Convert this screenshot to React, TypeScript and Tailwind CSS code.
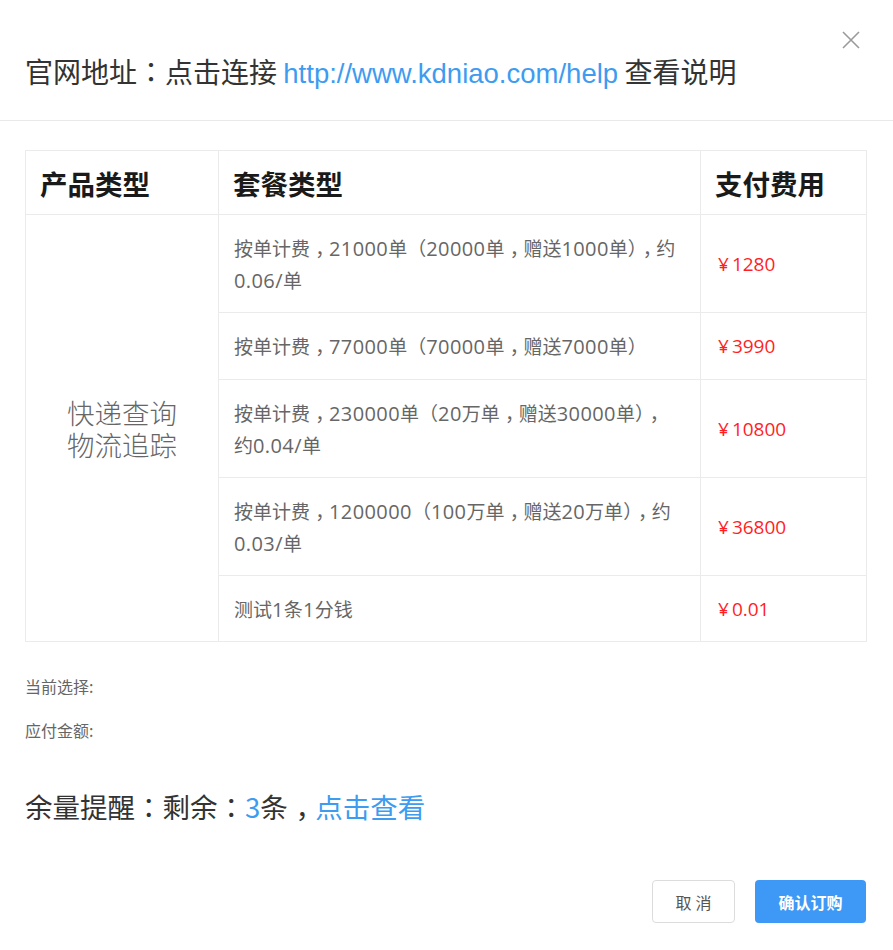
import React from "react";

const PUNCT_CLS: Record<string, string> = {
  "，": "ml-[0.28em] tracking-[-0.28em]",
  "：": "font-['Noto_Sans_CJK_TC','Noto_Sans_CJK_SC',sans-serif]",
  "（": "font-['Noto_Sans_CJK_TC','Noto_Sans_CJK_SC',sans-serif]",
  "）": "font-['Noto_Sans_CJK_TC','Noto_Sans_CJK_SC',sans-serif]",
};
const LATIN = /^[0-9.\/]+$/;

function fmt(s: string, latinCls: string) {
  return s
    .split(/([：，（）]|[0-9.\/]+)/)
    .filter(Boolean)
    .map((p, i) =>
      PUNCT_CLS[p] ? (
        <span key={i} className={PUNCT_CLS[p]}>
          {p}
        </span>
      ) : LATIN.test(p) && latinCls ? (
        <span key={i} className={latinCls}>
          {p}
        </span>
      ) : (
        <React.Fragment key={i}>{p}</React.Fragment>
      )
    );
}

const rows: { lines: string[]; price: string; h: string }[] = [
  { lines: ["按单计费，21000单（20000单，赠送1000单），约", "0.06/单"], price: "1280", h: "h-[98px]" },
  { lines: ["按单计费，77000单（70000单，赠送7000单）"], price: "3990", h: "h-[67px]" },
  { lines: ["按单计费，230000单（20万单，赠送30000单），", "约0.04/单"], price: "10800", h: "h-[98px]" },
  { lines: ["按单计费，1200000（100万单，赠送20万单），约", "0.03/单"], price: "36800", h: "h-[98px]" },
  { lines: ["测试1条1分钱"], price: "0.01", h: "h-[66px]" },
];

const bodyLatin = "font-['Open_Sans',sans-serif] text-[20px] tracking-[0.4px]";

export default function App() {
  return (
    <div className="relative w-[893px] h-[950px] bg-white font-['Noto_Sans_CJK_SC','Noto_Sans',sans-serif] text-[#333]">
      {/* header */}
      <div className="h-[121px] border-b border-[#e9e9e9] flex items-center px-[25px] pt-[24px]">
        <div className="text-[28px] leading-[36px] text-[#333] whitespace-nowrap">
          {fmt("官网地址：点击连接", "")}{" "}
          <span className="text-[#3d9cf0] text-[27.5px] font-['Liberation_Sans',Arial,sans-serif]">
            http://www.kdniao.com/help
          </span>{" "}
          查看说明
        </div>
      </div>
      <button className="absolute right-[32px] top-[30px] w-[20px] h-[20px] flex items-center justify-center">
        <svg width="20" height="20" viewBox="0 0 20 20" fill="none">
          <path d="M2 2L18 18M18 2L2 18" stroke="#9a9a9a" strokeWidth="1.6" />
        </svg>
      </button>

      {/* table */}
      <div className="px-[25px] pt-[29px]">
        <table className="w-[841px] border-collapse table-fixed">
          <colgroup>
            <col className="w-[193px]" />
            <col className="w-[482px]" />
            <col className="w-[166px]" />
          </colgroup>
          <thead>
            <tr className="h-[64px]">
              <th className="border border-[#ebebeb] text-left pl-[14px] text-[27.5px] font-bold text-[#1a1a1a] leading-[32px]">
                产品类型
              </th>
              <th className="border border-[#ebebeb] text-left pl-[14px] text-[27.5px] font-bold text-[#1a1a1a] leading-[32px]">
                套餐类型
              </th>
              <th className="border border-[#ebebeb] text-left pl-[14px] text-[27.5px] font-bold text-[#1a1a1a] leading-[32px]">
                支付费用
              </th>
            </tr>
          </thead>
          <tbody>
            {rows.map((r, i) => (
              <tr key={i} className={r.h}>
                {i === 0 && (
                  <td
                    rowSpan={rows.length}
                    className="border border-[#ebebeb] text-center align-middle text-[27.5px] leading-[32px] text-[#666] font-light"
                  >
                    <div>快递查询</div>
                    <div>物流追踪</div>
                  </td>
                )}
                <td className="border border-[#ebebeb] px-[15px] py-0 align-middle text-[19px] leading-[31px] text-[#666] whitespace-nowrap">
                  {r.lines.map((l, j) => (
                    <div key={j}>{fmt(l, bodyLatin)}</div>
                  ))}
                </td>
                <td className="border border-[#ebebeb] pl-[17px] align-middle text-[19px] leading-[28px] text-[#ff1f1f] font-['Open_Sans','Noto_Sans_CJK_SC',sans-serif]">
                  <span className="mr-[3px]">¥</span>
                  {r.price}
                </td>
              </tr>
            ))}
          </tbody>
        </table>
      </div>

      {/* summary */}
      <div className="px-[25px]">
        <div className="mt-[34px] text-[16px] leading-[20px] text-[#666]">当前选择:</div>
        <div className="mt-[24px] text-[16px] leading-[20px] text-[#666]">应付金额:</div>
        <div className="mt-[48px] text-[27.5px] leading-[36px] text-[#333] whitespace-nowrap">
          {fmt("余量提醒：剩余：", "")}
          <span className="text-[#3d9cf0]">3</span>条{fmt("，", "")}
          <span className="text-[#3d9cf0]">点击查看</span>
        </div>
      </div>

      {/* buttons */}
      <div className="mt-[56px] flex justify-end gap-[20px] pr-[27px]">
        <button className="w-[83px] h-[43px] rounded-[4px] border border-[#dcdcdc] bg-white text-[16px] text-[#555] tracking-[4px] pl-[4px]">
          取消
        </button>
        <button className="w-[111px] h-[43px] rounded-[4px] bg-[#3e98f6] text-[16px] text-white font-bold">
          确认订购
        </button>
      </div>
    </div>
  );
}
